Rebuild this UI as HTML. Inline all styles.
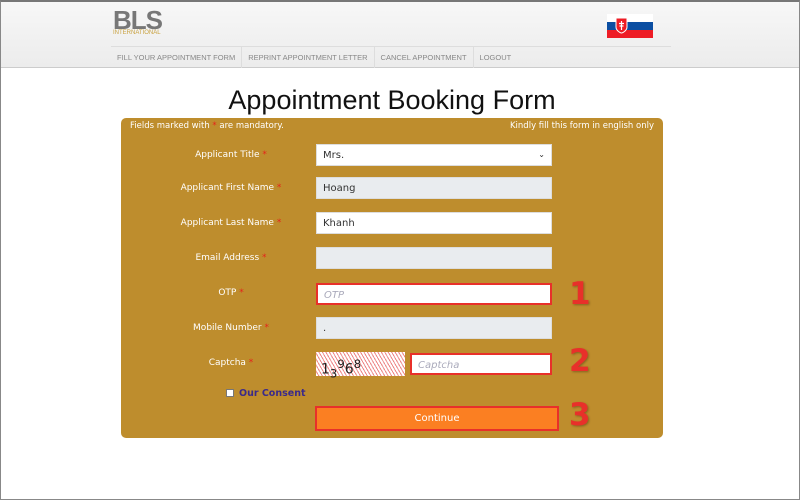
<!DOCTYPE html>
<html><head><meta charset="utf-8"><style>
*{box-sizing:border-box;margin:0;padding:0}
body{width:800px;height:500px;background:#fff;font-family:"Liberation Sans",sans-serif;position:relative;overflow:hidden}
.frame{position:absolute;left:0;top:0;width:800px;height:500px;border:1px solid #888;border-top:2px solid #777}
.hdr{position:absolute;left:1px;top:2px;width:798px;height:66px;background:linear-gradient(#f7f7f7,#ececec);border-bottom:1px solid #ccc}
.logo{position:absolute;left:112px;top:3px;font-weight:bold;font-size:26px;color:#777;letter-spacing:-1px}
.logo small{position:absolute;left:0;top:25px;font-size:6px;color:#c9a240;letter-spacing:0;font-weight:normal}
.flag{position:absolute;left:606px;top:12px;width:46px;height:24px}
.nav{position:absolute;left:110px;top:44px;width:560px;border-top:1px solid #ddd;font-size:7.5px;color:#888;display:flex;height:22px}
.nav div{padding:0 6px;line-height:22px;border-right:1px solid #ddd}
h1{position:absolute;left:0;width:784px;text-align:center;top:85px;font-weight:normal;font-size:27px;color:#111}
.panel{position:absolute;left:121px;top:118px;width:542px;height:320px;background:#be8d2d;border-radius:5px;color:#fff;font-size:9px;font-family:"DejaVu Sans",sans-serif}
.l{position:absolute;text-align:center;width:200px;left:10px}
.l b{color:#e5231b;font-weight:normal}
.in{position:absolute;left:195px;width:236px;height:22px;background:#fff;border:1px solid #ddd;font-size:10px;color:#333;padding:5px 6px}
.g{background:#e9ecef}
.red{border:2px solid #e8302a}
.ph{color:#aab;font-style:italic}
.num{position:absolute;left:569px;font-weight:900;font-size:31px;color:#e8302a;font-family:"DejaVu Sans",sans-serif;text-shadow:1px 1px 2px rgba(0,0,0,.3)}
</style></head><body>
<div class="hdr">
<div class="logo">BLS<small>INTERNATIONAL</small></div>
<svg class="flag" viewBox="0 0 46 24"><rect width="46" height="8" fill="#fff"/><rect y="8" width="46" height="8" fill="#0b4ea2"/><rect y="16" width="46" height="8" fill="#ee1c25"/><path d="M9 4h11v9c0 4-5 6-5.5 6S9 17 9 13z" fill="#ee1c25" stroke="#fff"/><path d="M14.5 7v9M12 9.5h5M12.5 12h4" stroke="#fff" stroke-width="1.2"/></svg>
<div class="nav"><div>FILL YOUR APPOINTMENT FORM</div><div>REPRINT APPOINTMENT LETTER</div><div>CANCEL APPOINTMENT</div><div style="border:0">LOGOUT</div></div>
</div>
<h1>Appointment Booking Form</h1>
<div class="panel">
<div style="position:absolute;left:9px;top:3px;font-size:8.5px">Fields marked with <span style="color:#e5231b">*</span> are mandatory.</div>
<div style="position:absolute;right:9px;top:3px;font-size:8.5px">Kindly fill this form in english only</div>
<div class="l" style="top:32px">Applicant Title <b>*</b></div>
<div class="in" style="top:26px">Mrs.<span style="float:right;font-size:8px">&#8964;</span></div>
<div class="l" style="top:65px">Applicant First Name <b>*</b></div>
<div class="in g" style="top:59px">Hoang</div>
<div class="l" style="top:100px">Applicant Last Name <b>*</b></div>
<div class="in" style="top:94px">Khanh</div>
<div class="l" style="top:135px">Email Address <b>*</b></div>
<div class="in g" style="top:129px"></div>
<div class="l" style="top:170px">OTP <b>*</b></div>
<div class="in red" style="top:165px"><span class="ph">OTP</span></div>
<div class="l" style="top:205px">Mobile Number <b>*</b></div>
<div class="in g" style="top:199px">.</div>
<div class="l" style="top:240px">Captcha <b>*</b></div>
<div style="position:absolute;left:195px;top:234px;width:89px;height:24px;background:repeating-linear-gradient(60deg,#fff 0 2px,#e88 2px 3px);color:#222;font-size:14px;padding-left:5px;line-height:24px">1<sub>3</sub><sup>9</sup>6<sup>8</sup></div>
<div class="in red" style="left:289px;width:142px;top:235px"><span class="ph">Captcha</span></div>
<div style="position:absolute;left:105px;top:271px;width:8px;height:8px;background:#fff;border:1px solid #777"></div>
<div style="position:absolute;left:118px;top:270px;color:#3b2a8a;font-weight:bold;font-size:9.5px">Our Consent</div>
<div style="position:absolute;left:194px;top:288px;width:244px;height:25px;background:#fb7f22;border:2px solid #e8302a;text-align:center;line-height:21px;font-size:10px">Continue</div>
</div>
<div class="num" style="top:276px">1</div>
<div class="num" style="top:343px">2</div>
<div class="num" style="top:397px">3</div>
<div class="frame"></div>
</body></html>
